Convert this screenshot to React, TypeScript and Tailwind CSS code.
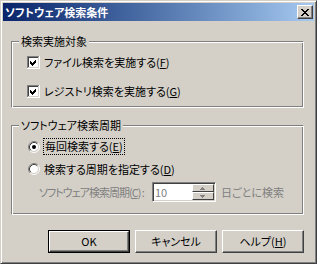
import React from 'react';

const jp = "font-['Noto_Sans_CJK_JP','Noto_Sans',sans-serif] [font-feature-settings:'palt'] text-[11px] leading-[13px] whitespace-nowrap";

// sunken 13x13 box with a check
const CheckBox: React.FC = () => (
  <svg width="13" height="13" viewBox="0 0 13 13" shapeRendering="crispEdges" className="shrink-0">
    <rect x="0" y="0" width="13" height="13" fill="#ffffff" />
    <rect x="0" y="0" width="12" height="12" fill="#808080" />
    <rect x="1" y="1" width="11" height="11" fill="#d4d0c8" />
    <rect x="1" y="1" width="10" height="10" fill="#404040" />
    <rect x="2" y="2" width="9" height="9" fill="#ffffff" />
    <polygon points="3,5 5,7 9,3 9,6 5,10 3,8" fill="#000000" />
  </svg>
);

const Radio: React.FC<{ on?: boolean }> = ({ on }) => (
  <svg width="12" height="12" viewBox="0 0 12 12" className="shrink-0">
    <circle cx="6" cy="6" r="4.5" fill="#ffffff" />
    <path d="M2.11 9.89 A5.5 5.5 0 0 1 9.89 2.11" fill="none" stroke="#808080" />
    <path d="M9.89 2.11 A5.5 5.5 0 0 1 2.11 9.89" fill="none" stroke="#ffffff" />
    <path d="M2.82 9.18 A4.5 4.5 0 0 1 9.18 2.82" fill="none" stroke="#404040" />
    <path d="M9.18 2.82 A4.5 4.5 0 0 1 2.82 9.18" fill="none" stroke="#d4d0c8" />
    {on && <circle cx="6" cy="6" r="2" fill="#000000" />}
  </svg>
);

const GroupBox: React.FC<{ label: string; className: string; children: React.ReactNode }> = ({ label, className, children }) => (
  <div className={`relative shrink-0 border border-t-[#808080] border-l-[#808080] border-r-white border-b-white shadow-[inset_1px_1px_0_#ffffff,inset_-1px_-1px_0_#808080] ${className}`}>
    <span className={`absolute left-[7px] -top-[7px] bg-[#d4d0c8] px-[2px] text-black ${jp}`}>{label}</span>
    {children}
  </div>
);

const Button: React.FC<{ def?: boolean; children: React.ReactNode }> = ({ def, children }) => (
  <div className={`w-[82px] h-[23px] shrink-0 ${def ? 'border border-black' : ''}`}>
    <div className="h-full border border-t-white border-l-white border-r-[#404040] border-b-[#404040] shadow-[inset_-1px_-1px_0_#808080] flex items-center justify-center">
      <span className={`text-black ${jp}`}>{children}</span>
    </div>
  </div>
);

const U: React.FC<{ children: React.ReactNode }> = ({ children }) => (
  <span className="underline underline-offset-[1px]">{children}</span>
);

export default function App() {
  return (
    <div className="w-[317px] h-[264px] bg-[#d4d0c8] border border-t-[#d4d0c8] border-l-[#d4d0c8] border-r-[#404040] border-b-[#404040] shadow-[inset_1px_1px_0_#ffffff,inset_-1px_-1px_0_#808080] p-[2px] flex flex-col">
      {/* title bar */}
      <div className="h-[18px] shrink-0 bg-gradient-to-r from-[#0a246a] to-[#a6caf0] flex items-center justify-between pl-[2px] pr-[1px]">
        <span className={`text-white font-bold ${jp}`}>ソフトウェア検索条件</span>
        <div className="w-[16px] h-[14px] bg-[#d4d0c8] border border-t-white border-l-white border-r-[#404040] border-b-[#404040] shadow-[inset_-1px_-1px_0_#808080] flex items-center justify-center">
          <svg width="8" height="7" viewBox="0 0 8 7" shapeRendering="crispEdges">
            <path d="M0 0h2v1h-2zM6 0h2v1h-2zM1 1h2v1h-2zM5 1h2v1h-2zM2 2h4v1h-4zM3 3h2v1h-2zM2 4h4v1h-4zM1 5h2v1h-2zM5 5h2v1h-2zM0 6h2v1h-2zM6 6h2v1h-2z" fill="#000000" />
          </svg>
        </div>
      </div>

      {/* body */}
      <div className="flex flex-col shrink-0 pl-[8px] pr-[10px] pt-[20px]">
        <GroupBox label="検索実施対象" className="h-[67px] pl-[15px] pt-[14px] flex flex-col gap-[16px]">
          <div className="flex items-center gap-[4px] h-[13px]">
            <CheckBox />
            <span className={`text-black ${jp}`}>ファイル検索を実施する(<U>F</U>)</span>
          </div>
          <div className="flex items-center gap-[4px] h-[13px]">
            <CheckBox />
            <span className={`text-black ${jp}`}>レジストリ検索を実施する(<U>G</U>)</span>
          </div>
        </GroupBox>

        <GroupBox label="ソフトウェア検索周期" className="mt-[17px] h-[90px] pl-[16px] pt-[12px] flex flex-col">
          <div className="flex items-center gap-[3px] h-[17px]">
            <Radio on />
            <span className={`text-black border border-dotted border-black px-[1px] py-[1px] ${jp}`}>毎回検索する(<U>E</U>)</span>
          </div>
          <div className="flex items-center gap-[4px] mt-[8px] h-[12px]">
            <Radio />
            <span className={`text-black ${jp}`}>検索する周期を指定する(<U>D</U>)</span>
          </div>
          <div className="flex items-center mt-[7px] pl-[11px]">
            <span className={`text-[#808080] tracking-[-1px] ${jp}`}>ソフトウェア検索周期(<U>C</U>) :</span>
            <div className="ml-[8px] shrink-0 w-[64px] h-[20px] bg-white border border-t-[#808080] border-l-[#808080] border-r-white border-b-white shadow-[inset_1px_1px_0_#404040,inset_-1px_-1px_0_#d4d0c8] flex items-stretch pl-[2px] pt-[1px] pr-[1px] pb-[1px]">
              <span className={`flex-1 text-[#808080] ${jp} leading-[16px]`}>10</span>
              <div className="w-[22px] flex flex-col">
                <div className="flex-1 bg-[#d4d0c8] border border-t-white border-l-white border-r-[#404040] border-b-[#404040] flex items-center justify-center">
                  <svg width="5" height="3" viewBox="0 0 5 3" shapeRendering="crispEdges"><path d="M2 0h1v1h1v1h1v1h-5v-1h1v-1h1z" fill="#808080" /></svg>
                </div>
                <div className="flex-1 bg-[#d4d0c8] border border-t-white border-l-white border-r-[#404040] border-b-[#404040] flex items-center justify-center">
                  <svg width="5" height="3" viewBox="0 0 5 3" shapeRendering="crispEdges"><path d="M0 0h5v1h-1v1h-1v1h-1v-1h-1v-1h-1z" fill="#808080" /></svg>
                </div>
              </div>
            </div>
            <span className={`ml-[5px] text-[#808080] ${jp}`}>日ごとに検索</span>
          </div>
        </GroupBox>

        <div className="mt-[15px] flex justify-end gap-[5px]">
          <Button def>OK</Button>
          <Button>キャンセル</Button>
          <Button>ヘルプ(<U>H</U>)</Button>
        </div>
      </div>
    </div>
  );
}
